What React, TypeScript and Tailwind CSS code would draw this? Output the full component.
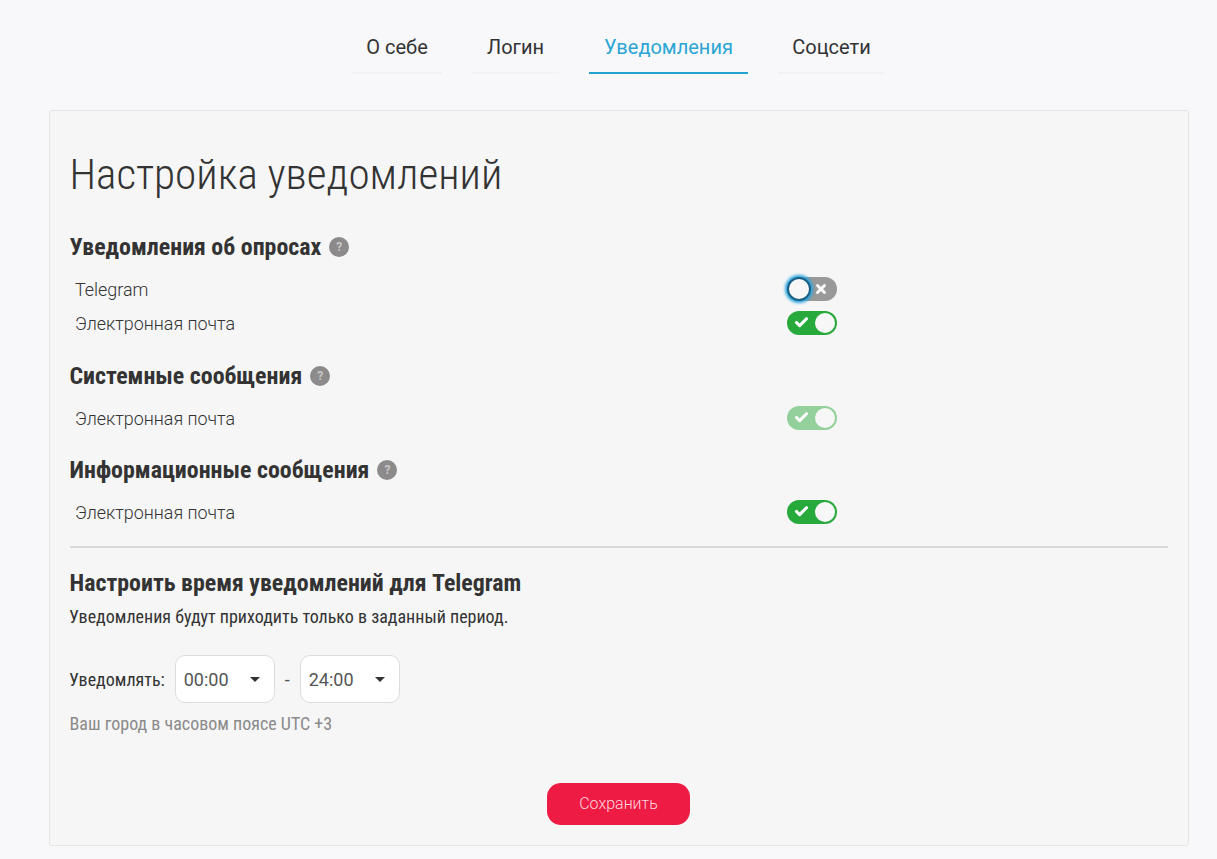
import { Check, X } from "lucide-react";

const TABS = [
  { label: "О себе", width: "w-[90px]" },
  { label: "Логин", width: "w-[87px]" },
  { label: "Уведомления", width: "w-[159px]", active: true },
  { label: "Соцсети", width: "w-[107px]" },
];

function Hint() {
  return (
    <span className="flex h-5 w-5 items-center justify-center rounded-full bg-[#8c8a8a] text-[12px] font-bold text-[#c9c8c8]">
      ?
    </span>
  );
}

function Toggle({ on = true, faded = false }: { on?: boolean; faded?: boolean }) {
  if (!on) {
    return (
      <div className="mb-px flex h-6 w-[50px] items-center justify-between rounded-full bg-[#999999] pr-[9px]">
        <span className="h-6 w-6 rounded-full border-2 border-[#1c5f86] bg-[#f7f7f7] shadow-[0_0_3px_2px_#2aa5dc]" />
        <X size={14} strokeWidth={5} className="text-white" />
      </div>
    );
  }
  return (
    <div
      className={`mb-px flex h-6 w-[50px] items-center justify-between rounded-full pl-[7px] pr-[2px] ${
        faded ? "bg-[#94d09c]" : "bg-[#28a93b]"
      }`}
    >
      <Check size={15} strokeWidth={5} className="text-white" />
      <span className="h-5 w-5 rounded-full bg-[#f7f7f7]" />
    </div>
  );
}

function Row({ label, children }: { label: string; children: React.ReactNode }) {
  return (
    <div className="flex h-[34px] w-[767px] items-center justify-between pl-[5px]">
      <span className="mt-[2px] text-[17.9px] font-light text-[#333333]">{label}</span>
      {children}
    </div>
  );
}

function SectionTitle({ title }: { title: string }) {
  return (
    <div className="flex items-center gap-2">
      <h2 className="-ml-[0.5px] text-[23.9px] leading-[26px] font-bold text-[#333333] [font-stretch:75%]">{title}</h2>
      <Hint />
    </div>
  );
}

function TimeSelect({ value }: { value: string }) {
  return (
    <div className="flex h-12 w-[100px] items-center justify-between rounded-[10px] border border-[#dcdcdc] bg-white pr-[14px] pl-[8px] text-[18px] text-[#555555]">
      {value}
      <span className="h-0 w-0 border-x-[5px] border-t-[5px] border-x-transparent border-t-[#333333]" />
    </div>
  );
}

export default function App() {
  return (
    <div className="min-h-[859px] bg-[#f8f8fa] pr-[28px] pl-[49px] pt-[21px] font-['Roboto',sans-serif]">
      {/* Tabs */}
      <div className="flex justify-center gap-[30px] pr-[1px]">
        {TABS.map((tab) => (
          <div
            key={tab.label}
            className={`flex h-[53px] items-center justify-center border-b-2 text-[20px] ${tab.width} ${
              tab.active ? "border-[#22a3cf] text-[#2ba5d3]" : "border-[#f2f2f4] text-[#333333]"
            }`}
          >
            {tab.label}
          </div>
        ))}
      </div>

      {/* Card */}
      <div className="mt-[36px] h-[736px] rounded-[3px] border border-[#e4e4e4] bg-[#f6f6f6] px-5 pt-[39px]">
        <h1 className="-ml-[0.5px] text-[43.2px] leading-[50px] font-light text-[#333333] [font-stretch:75%]">
          Настройка уведомлений
        </h1>

        <div className="mt-[34px]">
          <SectionTitle title="Уведомления об опросах" />
        </div>
        <div className="mt-3">
          <Row label="Telegram">
            <Toggle on={false} />
          </Row>
          <Row label="Электронная почта">
            <Toggle />
          </Row>
        </div>

        <div className="mt-[23px]">
          <SectionTitle title="Системные сообщения" />
        </div>
        <div className="mt-3">
          <Row label="Электронная почта">
            <Toggle faded />
          </Row>
        </div>

        <div className="mt-[22px]">
          <SectionTitle title="Информационные сообщения" />
        </div>
        <div className="mt-3">
          <Row label="Электронная почта">
            <Toggle />
          </Row>
        </div>

        <div className="mt-[17px] h-0.5 bg-[#d9d9d9]" />

        <h3 className="mt-[22px] -ml-[0.5px] text-[23.9px] leading-[26px] font-bold text-[#333333] [font-stretch:75%]">
          Настроить время уведомлений для Telegram
        </h3>
        <p className="mt-[10px] -ml-px text-[18px] leading-[22px] font-normal text-[#333333] [font-stretch:75%]">
          Уведомления будут приходить только в заданный период.
        </p>

        <div className="mt-[27px] flex items-center">
          <span className="mr-[10px] -ml-px text-[18px] font-normal text-[#333333] [font-stretch:75%]">Уведомлять:</span>
          <TimeSelect value="00:00" />
          <span className="mx-[10px] w-[5px] text-[18px] text-[#555555]">-</span>
          <TimeSelect value="24:00" />
        </div>
        <p className="mt-[10px] -ml-[0.5px] text-[18px] leading-[22px] text-[#8a8a8a] [font-stretch:75%]">Ваш город в часовом поясе UTC +3</p>

        <div className="mt-[48px] flex justify-center pr-[1px]">
          <button className="h-[42px] w-[143px] rounded-[14px] bg-[#ee1b45] text-[16px] font-light text-[#ffd5dd]">
            Сохранить
          </button>
        </div>
      </div>
    </div>
  );
}
